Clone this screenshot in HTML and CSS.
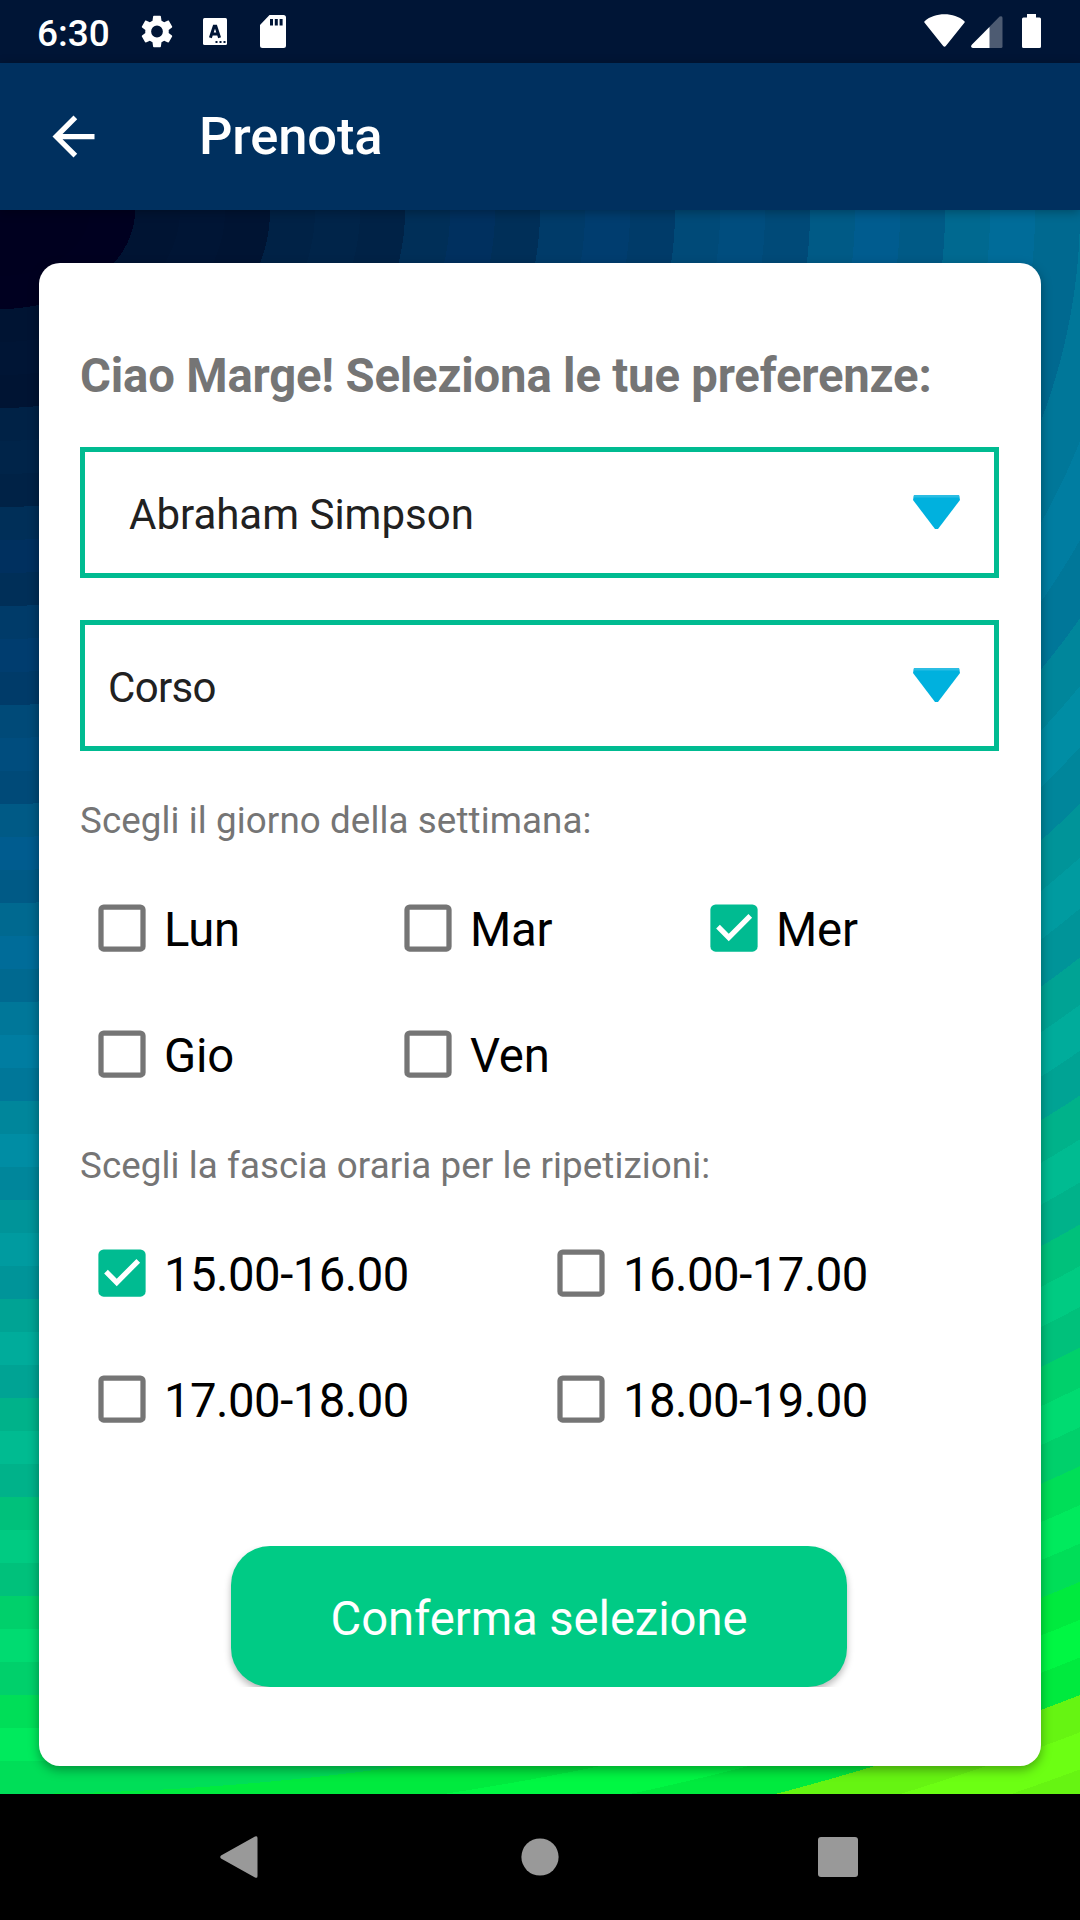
FILE: index.html
```html
<!DOCTYPE html>
<html lang="it">
<head>
<meta charset="utf-8">
<title>Prenota</title>
<link rel="stylesheet" href="styles.css">
</head>
<body>
<svg class="defs" width="0" height="0" aria-hidden="true">
  <symbol id="box-off" viewBox="0 0 32 32"><rect x="8" y="8" width="16" height="16" rx="1" fill="none" stroke="#757575" stroke-width="2"/></symbol>
  <symbol id="box-on" viewBox="0 0 32 32"><rect x="7" y="7" width="18" height="18" rx="2" fill="#00bb91"/><path d="M14 21l-4.800-4.800 1.410-1.410L14 18.170l7.500-7.500 1.400 1.410z" fill="#fff"/></symbol>
  <symbol id="caret" viewBox="0 0 47 34"><path d="M1 0H46L47 5 25 34H22L0 5z" fill="#00b1de"/><path d="M1 0H46L46.5 2.500H.5z" fill="#2bbde3"/></symbol>
</svg>

<header class="status">
  <span class="time">6:30</span>
  <svg class="gear" viewBox="2.2 2 19.6 20"><path fill="#fff" d="M19.14 12.94c.04-.3.06-.61.06-.94s-.02-.64-.07-.94l2.03-1.58c.18-.14.23-.41.12-.61l-1.92-3.32c-.12-.22-.37-.29-.59-.22l-2.39.96c-.5-.38-1.03-.7-1.62-.94l-.36-2.54c-.04-.24-.24-.41-.48-.41h-3.84c-.24 0-.43.17-.47.41l-.36 2.54c-.59.24-1.13.57-1.62.94l-2.39-.96c-.22-.08-.47 0-.59.22L2.74 8.870c-.12.21-.08.47.12.61l2.03 1.58c-.05.3-.09.63-.09.94s.02.64.07.94l-2.03 1.58c-.18.14-.23.41-.12.61l1.920 3.320c.12.22.37.29.59.22l2.390-.96c.5.38 1.030.7 1.620.94l.36 2.540c.05.24.24.41.48.41h3.840c.24 0 .44-.17.47-.41l.36-2.540c.59-.24 1.130-.56 1.620-.94l2.390.96c.22.08.47 0 .59-.22l1.920-3.320c.12-.22.07-.47-.12-.61zM12 15.600A3.600 3.600 0 1 1 12 8.400a3.600 3.600 0 0 1 0 7.200z"/></svg>
  <svg class="lang" viewBox="0 0 24 27"><rect width="24" height="27" rx="1.5" fill="#fff"/><path d="M7.400 19.800L11.200 8.200h1.600l3.800 11.600M9 16h6" fill="none" stroke="#001536" stroke-width="3"/><path d="M12.5 23h2v2h-2zM16.5 23h2v2h-2zM20.5 23h2v2h-2z" fill="#001536"/></svg>
  <svg class="sd" viewBox="0 0 26 33"><path d="M9.5 0H23.500a2.500 2.500 0 0 1 2.500 2.500V30.500a2.500 2.500 0 0 1-2.500 2.500H2.500A2.500 2.500 0 0 1 0 30.500V10z" fill="#fff"/><path d="M10 4h3v6.500h-3zM14.800 4h3v6.500h-3zM19.600 4h3v6.500h-3z" fill="#001536"/></svg>
  <span class="spacer"></span>
  <svg class="wifi" viewBox="0 0 41 33"><path d="M.6 7.200C6 2.500 13 .3 20.500.3S35 2.500 40.400 7.200q.6.700 0 1.600L21.800 32q-1.300 1.400-2.600 0L.6 8.800q-.6-.9 0-1.600z" fill="#fff"/></svg>
  <svg class="signal" viewBox="0 0 32 32"><path d="M28.600.6Q31.500-.8 31.500 2V30.500Q31.500 32 30 32H2Q-.6 31.600.6 29z" fill="#4d5b72"/><path d="M18.500 10.900V32H2Q-.6 31.600.6 29z" fill="#fff"/></svg>
  <svg class="battery" viewBox="0 0 19 34"><path d="M5 0h9v3.500h3.500Q19 3.500 19 5v27.500q0 1.500-1.500 1.500h-16Q0 34 0 32.500V5Q0 3.500 1.500 3.500H5z" fill="#fff"/></svg>
</header>

<nav class="appbar">
  <svg class="back" viewBox="0 0 24 24"><path d="M20 11H7.830l5.590-5.590L12 4l-8 8 8 8 1.410-1.410L7.830 13H20z" fill="#fff"/></svg>
  <h1 class="title">Prenota</h1>
</nav>

<main class="content">
  <section class="card">
    <h2 class="greeting">Ciao Marge! Seleziona le tue preferenze:</h2>
    <div class="spinner spinner-student"><span>Abraham Simpson</span><svg class="caret"><use href="#caret"/></svg></div>
    <div class="spinner spinner-course"><span>Corso</span><svg class="caret"><use href="#caret"/></svg></div>

    <p class="label label-days">Scegli il giorno della settimana:</p>
    <div class="options days">
      <label class="option"><svg class="box"><use href="#box-off"/></svg><span>Lun</span></label>
      <label class="option"><svg class="box"><use href="#box-off"/></svg><span>Mar</span></label>
      <label class="option"><svg class="box"><use href="#box-on"/></svg><span>Mer</span></label>
      <label class="option"><svg class="box"><use href="#box-off"/></svg><span>Gio</span></label>
      <label class="option"><svg class="box"><use href="#box-off"/></svg><span>Ven</span></label>
    </div>

    <p class="label label-hours">Scegli la fascia oraria per le ripetizioni:</p>
    <div class="options hours">
      <label class="option"><svg class="box"><use href="#box-on"/></svg><span>15.00-16.00</span></label>
      <label class="option"><svg class="box"><use href="#box-off"/></svg><span>16.00-17.00</span></label>
      <label class="option"><svg class="box"><use href="#box-off"/></svg><span>17.00-18.00</span></label>
      <label class="option"><svg class="box"><use href="#box-off"/></svg><span>18.00-19.00</span></label>
    </div>

    <div class="actions"><button class="confirm">Conferma selezione</button></div>
  </section>
</main>

<footer class="navbar">
  <svg class="nav-back" viewBox="0 0 38 42"><path d="M35 .6Q37.500-.8 37.500 2V40Q37.500 42.800 35 41.400L1 22.500Q-.5 21 1 19.500z" fill="#999"/></svg>
  <svg class="nav-home" viewBox="0 0 38 38"><circle cx="19" cy="19" r="18.600" fill="#999"/></svg>
  <svg class="nav-recent" viewBox="0 0 40 40"><rect width="40" height="40" rx="3" fill="#999"/></svg>
</footer>
</body>
</html>
```

FILE: styles.css
```css
* { box-sizing: border-box; }

body {
  margin: 0;
  width: 1080px;
  height: 1920px;
  display: flex;
  flex-direction: column;
  overflow: hidden;
  background: #000;
  font-family: Roboto, "Liberation Sans", sans-serif;
}

svg { display: block; flex: none; }
.defs { position: absolute; }
h1, h2, p { margin: 0; }

/* status bar */
.status {
  height: 63px;
  flex: none;
  display: flex;
  align-items: flex-start;
  padding: 0 39px 0 37px;
  background: #001536;
  color: #fff;
}
.time { width: 104px; font-size: 37px; line-height: 67px; font-weight: 500; }
.gear { width: 32px; height: 33px; margin-top: 15px; }
.lang { width: 24px; height: 27px; margin: 18px 0 0 30px; }
.sd { width: 26px; height: 33px; margin: 15px 0 0 33px; }
.spacer { flex: 1; }
.wifi { width: 41px; height: 33px; margin: 14px 6px 0 0; }
.signal { width: 32px; height: 32px; margin: 16px 19px 0 0; }
.battery { width: 19px; height: 34px; margin-top: 14px; }

/* app bar */
.appbar {
  height: 147px;
  flex: none;
  display: flex;
  align-items: center;
  padding-left: 42px;
  background: #00305f;
  box-shadow: 0 2px 10px rgba(0, 0, 0, .3);
  z-index: 1;
}
.back { width: 63px; height: 63px; }
.title {
  margin-left: 94px;
  padding-bottom: 2px;
  color: #fff;
  font-size: 52.5px;
  font-weight: 500;
  line-height: 62px;
  letter-spacing: -.15px;
}

/* concentric colour rings spreading from the top-left corner */
.content {
  height: 1584px;
  flex: none;
  padding: 53px 39px 28px;
  background: radial-gradient(2430px 1782px at 0 0,
    #00001f 0 3.7037%, #000020 0 5.5556%,
    #001433 0 7.4074%, #001535 0 9.2593%, #001433 0 11.1111%,
    #002246 0 12.963%, #002449 0 14.8148%, #002246 0 16.6667%,
    #002f58 0 18.5185%, #00305f 0 20.3704%, #002f58 0 22.2222%,
    #003b69 0 24.0741%, #003d6f 0 25.9259%, #003b69 0 27.7778%,
    #004a78 0 29.6296%, #004d7e 0 31.4815%, #004a78 0 33.3333%,
    #005a86 0 35.1852%, #005c8f 0 37.037%, #005a86 0 38.8889%,
    #006990 0 40.7407%, #006c99 0 42.5926%, #006990 0 44.4444%,
    #007799 0 46.2963%, #007da1 0 48.1481%, #007799 0 50%,
    #00869b 0 51.8519%, #008da4 0 53.7037%, #00869b 0 55.5556%,
    #009499 0 57.4074%, #009ba0 0 59.2593%, #009499 0 61.1111%,
    #00a394 0 62.963%, #00ac9b 0 64.8148%, #00a394 0 66.6667%,
    #00b28a 0 68.5185%, #00bb91 0 70.3704%, #00b28a 0 72.2222%,
    #00c17b 0 74.0741%, #00cb82 0 75.9259%, #00c17b 0 77.7778%,
    #00d06b 0 79.6296%, #00db71 0 81.4815%, #00d06b 0 83.3333%,
    #00de58 0 85.1852%, #00ea5d 0 87.037%, #00de58 0 88.8889%,
    #00ea3e 0 90.7407%, #00f743 0 92.5926%, #00ea3e 0 94.4444%,
    #66f412 0 96.2963%, #6cff13 0 98.1481%, #66f412 0);
}

.card {
  height: 1503px;
  padding: 85px 42px 0 41px;
  display: flex;
  flex-direction: column;
  border-radius: 21px;
  background: #fff;
  box-shadow: 0 4px 11px rgba(0, 0, 0, .34);
}
.greeting {
  color: #757575;
  font-size: 47.25px;
  line-height: 56px;
  font-weight: 700;
  white-space: nowrap;
  letter-spacing: -.18px;
  margin-bottom: 43px;
}
.spinner {
  height: 131px;
  display: flex;
  align-items: center;
  justify-content: space-between;
  padding: 0 34px 0 23px;
  border: 5px solid #00bb91;
  color: #212121;
  font-size: 42px;
  line-height: 50px;
}
.spinner span { padding-top: 4px; }
.spinner-student { padding-left: 44px; margin-bottom: 42px; }
.spinner-course { letter-spacing: -.7px; }
.caret { width: 47px; height: 34px; margin-bottom: 2px; }

.label {
  color: #757575;
  font-size: 36.75px;
  line-height: 44px;
  letter-spacing: .09px;
  white-space: nowrap;
}
.label-days { margin: 48px 0 22px; }
.label-hours { margin: 27px 0 22px; }
.options { display: grid; grid-auto-rows: 126px; }
.days { grid-template-columns: repeat(3, 306px); letter-spacing: -.2px; }
.hours { grid-template-columns: repeat(2, 459px); letter-spacing: -.5px; }
.option { display: flex; align-items: center; color: #000; font-size: 47.25px; line-height: 56px; }
.option span { padding-top: 3px; }
.box { width: 84px; height: 84px; }

/* the wrapper cuts the button shadow off at its lower edge */
.actions {
  margin-top: 84px;
  display: flex;
  padding-left: 151px;
  overflow: hidden;
}
.confirm {
  width: 616px;
  height: 141px;
  padding: 5px 0 0;
  border: 0;
  border-radius: 39px;
  background: #00cb85;
  box-shadow: 0 4px 7px rgba(0, 0, 0, .28);
  color: #fff;
  font-family: inherit;
  font-size: 47.25px;
  line-height: 56px;
  letter-spacing: -.1px;
}

/* system navigation */
.navbar {
  height: 126px;
  display: flex;
  align-items: center;
  padding-left: 220px;
  background: #000;
}
.nav-back { width: 38px; height: 42px; }
.nav-home { width: 38px; height: 38px; margin: 0 259.5px 0 262.5px; }
.nav-recent { width: 40px; height: 40px; }
```
